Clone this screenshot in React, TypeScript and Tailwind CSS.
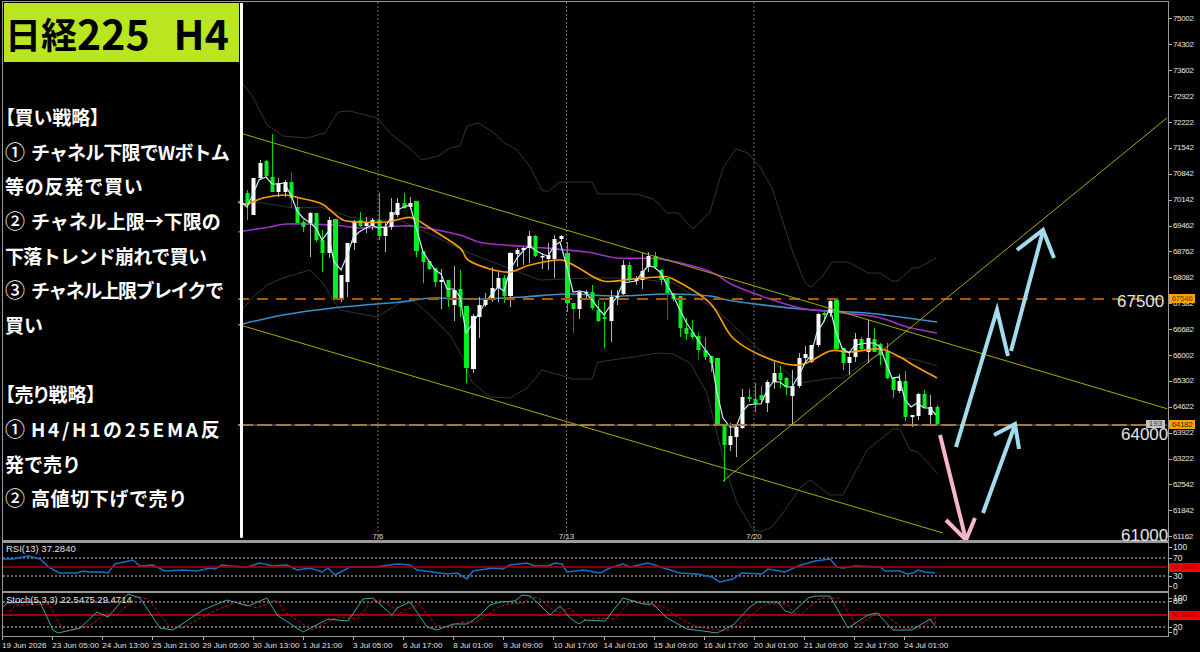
import React from "react";

type Bar = [number, number, number, number, "g" | "w" | "d"];
// high, body top, body bottom, low, kind, in page pixels
const bars: Bar[] = [
  [190,193,205,220,"g"],[178,178,215,215,"w"],[160,163,178,180,"w"],[160,161,176,177,"g"],[134,177,192,192,"g"],[178,183,192,197,"w"],
  [180,182,192,197,"w"],[172,182,198,208,"d"],[197,207,223,223,"g"],[220,222,227,232,"g"],[212,213,223,257,"w"],[213,213,240,242,"g"],
  [230,240,253,272,"g"],[217,220,253,258,"w"],[219,219,300,300,"g"],[275,275,298,302,"w"],[243,243,282,297,"w"],[220,222,243,250,"w"],
  [212,220,226,227,"g"],[217,222,226,233,"w"],[218,220,226,230,"w"],[193,220,236,240,"g"],[223,227,236,252,"w"],[198,212,227,230,"w"],
  [198,203,215,217,"w"],[193,203,208,209,"g"],[197,203,207,209,"w"],[201,201,251,257,"g"],[251,251,262,283,"g"],[261,261,269,270,"g"],
  [268,268,282,287,"g"],[269,280,282,309,"w"],[280,280,297,307,"g"],[266,290,305,321,"w"],[270,289,307,317,"g"],[306,306,368,383,"g"],
  [314,316,369,373,"w"],[297,305,317,338,"w"],[293,300,305,307,"w"],[267,288,300,302,"w"],[272,278,288,302,"w"],[275,278,296,303,"g"],
  [252,253,296,307,"w"],[248,250,254,267,"w"],[247,248,250,265,"w"],[231,236,248,263,"w"],[235,236,256,257,"g"],[253,256,257,269,"w"],
  [243,255,259,270,"w"],[235,239,259,278,"w"],[235,236,239,242,"w"],[242,253,303,312,"g"],[303,303,309,333,"d"],[290,292,309,319,"w"],
  [290,292,293,300,"w"],[285,292,308,310,"g"],[300,310,321,322,"g"],[302,317,319,348,"g"],[290,297,321,342,"w"],[290,296,297,305,"w"],
  [260,265,294,295,"w"],[262,265,280,282,"g"],[276,279,281,285,"w"],[253,271,280,289,"w"],[252,256,267,272,"w"],[252,256,267,268,"g"],
  [269,270,280,285,"g"],[278,278,293,320,"d"],[293,293,299,301,"g"],[296,296,328,337,"g"],[318,328,334,340,"g"],[320,332,337,339,"g"],
  [332,336,350,360,"d"],[337,350,357,360,"g"],[356,356,363,372,"g"],[358,358,425,425,"g"],[425,425,445,482,"g"],[423,436,445,451,"w"],
  [425,427,437,457,"w"],[389,397,428,429,"w"],[389,397,399,402,"g"],[383,399,404,412,"g"],[386,395,400,402,"g"],[380,382,403,412,"w"],
  [362,373,382,389,"w"],[366,373,380,388,"g"],[377,378,387,395,"g"],[370,386,396,425,"w"],[353,358,386,388,"w"],[346,354,358,363,"w"],
  [345,345,362,363,"w"],[313,314,345,347,"w"],[312,313,315,322,"g"],[298,301,313,317,"w"],[300,300,349,350,"g"],[348,348,363,370,"g"],
  [352,357,363,375,"w"],[333,339,357,362,"w"],[337,339,349,350,"g"],[320,338,352,363,"w"],[328,339,352,352,"g"],[343,344,355,365,"g"],
  [343,351,378,379,"g"],[378,378,390,398,"g"],[374,381,391,393,"w"],[371,381,417,421,"g"],[415,415,417,427,"w"],[393,394,416,420,"w"],
  [390,394,408,408,"g"],[395,407,415,424,"w"],[405,407,425,425,"g"],
];

const fast = "240,201 247,207 253,194 259,180 266,177 272,184 278,184 284,183 291,195 297,211 303,218 309,222 316,228 322,240 328,232 334,262 341,270 347,256 353,238 359,232 366,228 372,225 378,228 385,227 391,218 397,210 404,207 410,205 416,227 423,252 435,270 441,274 447,289 454,289 460,297 466,333 473,323 479,313 485,303 491,295 498,287 504,291 510,270 517,258 523,251 529,246 535,250 542,254 548,256 554,246 560,242 567,267 573,292 579,291 585,292 592,300 598,308 604,315 610,306 617,297 623,283 629,282 636,281 642,273 648,266 654,267 661,273 667,285 673,295 679,308 686,322 692,331 698,340 704,348 711,357 717,393 723,418 730,427 736,427 742,412 748,405 755,404 761,404 767,390 773,382 780,382 786,387 792,387 798,377 805,363 811,355 817,332 823,323 830,308 836,332 842,348 849,353 855,345 861,344 868,343 874,343 880,347 886,363 892,378 899,377 905,400 911,407 917,403 924,408 930,408 936,415";
const ema = "238,202 247,204 263,198 285,195 300,198 320,203 330,210 343,220 360,222 387,222 400,219 413,218 433,230 460,248 468,260 490,269 510,272 530,265 560,260 577,267 603,281 633,279 660,277 673,279 710,303 733,338 767,358 800,365 830,351 850,352 880,349 900,357 913,365 937,378";
const purple = "238,232 270,227 287,224 333,225 360,228 400,226 420,227 460,235 483,243 533,247 587,252 617,258 660,259 700,268 717,275 733,285 767,298 800,308 833,312 877,317 907,327 937,333";
const blue = "238,325 283,315 333,308 400,302 433,298 477,299 523,297 567,294 617,296 667,294 710,296 733,301 800,309 867,313 900,317 937,322";
const bandUp = "243,84 253,97 267,125 283,136 307,138 325,133 338,112 350,111 377,118 392,135 408,147 422,160 438,156 450,148 460,146 467,126 478,123 493,132 503,142 517,150 530,167 542,190 547,192 560,182 592,182 598,194 637,194 653,199 658,203 667,213 678,213 693,229 700,222 710,212 723,168 736,149 748,153 760,167 772,188 793,253 805,283 811,287 822,277 832,262 848,262 868,273 880,273 892,281 898,281 912,268 918,268 936,258";
const bandMid = "238,200 263,203 293,208 320,207 350,217 377,220 400,220 417,228 467,252 500,265 540,280 587,278 633,278 673,283 717,310 767,357 800,383 833,378 843,378 867,360 880,355 900,357 917,360 937,366";
const bandLow = "240,312 253,297 267,285 283,278 310,270 323,283 333,300 340,310 377,317 393,307 400,303 413,301 427,312 450,335 463,358 472,382 490,397 510,398 527,388 542,370 573,379 592,379 598,362 633,357 658,353 673,354 690,363 707,393 727,473 737,503 752,528 760,532 772,527 785,510 800,488 810,480 830,495 843,495 867,450 893,429 900,429 910,450 918,452 937,473";

const rsi = "2,559 13,559 28,556 40,559 50,568 60,573 77,573 83,571 90,572 103,572 108,573 115,564 133,560 140,566 153,565 165,571 183,570 197,571 210,568 215,569 222,565 230,566 247,567 260,563 273,566 287,565 297,570 310,568 322,572 328,568 335,575 350,567 375,567 397,564 410,565 417,570 433,572 447,574 457,573 467,579 473,571 493,568 503,569 510,565 527,563 535,566 548,566 555,563 562,564 567,572 583,570 600,573 610,568 623,564 630,567 648,563 667,569 680,573 697,574 712,577 720,582 733,579 742,573 762,574 768,569 785,572 798,566 815,561 830,559 837,567 843,568 855,566 880,567 885,571 900,571 907,574 913,573 918,570 925,572 935,573";
const stoch = "0,610 7,603 40,602 53,630 58,633 80,628 97,612 108,617 128,594 140,598 160,628 173,630 203,610 227,600 248,606 267,598 277,615 303,632 328,619 348,621 363,599 373,598 392,615 397,608 410,602 427,627 437,630 453,624 467,624 478,617 490,605 500,602 515,601 522,595 530,596 540,605 550,615 560,606 570,618 579,624 585,620 605,621 623,598 643,604 653,604 667,618 687,629 703,631 717,633 733,625 750,607 757,602 778,602 785,611 792,613 808,598 815,596 830,596 848,628 868,615 877,613 893,630 912,630 930,619 935,626";
const signal = stoch.split(" ").map((p) => { const [x, y] = p.split(",").map(Number); return `${Math.min(x + 9, 935)},${y + (y < 615 ? 2 : -2)}`; }).join(" ");

// Catmull-Rom smoothing for the slow moving averages
function smooth(src: string): string {
  const p = src.split(" ").map((s) => s.split(",").map(Number));
  let d = `M${p[0][0]} ${p[0][1]}`;
  for (let i = 0; i < p.length - 1; i++) {
    const a = p[Math.max(i - 1, 0)], b = p[i], c = p[i + 1], e = p[Math.min(i + 2, p.length - 1)];
    d += ` C${b[0] + (c[0] - a[0]) / 6} ${b[1] + (c[1] - a[1]) / 6} ${c[0] - (e[0] - b[0]) / 6} ${c[1] - (e[1] - b[1]) / 6} ${c[0]} ${c[1]}`;
  }
  return d;
}

const prices = ["75002","74302","73602","72922","72222","71542","70842","70142","69462","68762","68082","67382","66682","66002","65302","64622","63922","63222","62542","61842","61162"];
const times = ["19 Jun 2026","23 Jun 05:00","24 Jun 13:00","25 Jun 21:00","29 Jun 05:00","30 Jun 13:00","1 Jul 21:00","3 Jul 05:00","6 Jul 17:00","8 Jul 01:00","9 Jul 09:00","10 Jul 17:00","14 Jul 01:00","15 Jul 09:00","16 Jul 17:00","20 Jul 01:00","21 Jul 09:00","22 Jul 17:00","24 Jul 01:00"];
const grid = [378, 566.5, 754];

function Mark({ children }: { children: React.ReactNode }) {
  return <span className="inline-block w-[26px] text-[20px] font-medium">{children}</span>;
}

function Tick({ children }: { children: React.ReactNode }) {
  return (
    <div className="flex items-center h-[25.9px] shrink-0">
      <span className="w-[3px] h-px bg-[#b0b0b0]" />
      <span className="ml-[1px] text-[8px] tracking-[-0.35px] text-[#e4e4e4] leading-none">{children}</span>
    </div>
  );
}

function Scale({ h, mt, children }: { h: string; mt?: string; children: React.ReactNode }) {
  return (
    <div className={`flex items-center shrink-0 ${h} ${mt ?? ""}`}>
      <span className="w-[3px] h-px bg-[#b0b0b0]" />
      <span className="ml-[1px] text-[8.5px] text-[#e4e4e4] leading-none">{children}</span>
    </div>
  );
}

function RedTag() {
  return (
    <div className="flex items-center h-[4px] shrink-0">
      <span className="flex items-center justify-center w-[31px] h-[9px] bg-[#ff0000] text-[7.5px] text-[#9a0000] leading-none">50.0000</span>
    </div>
  );
}

export default function App() {
  return (
    <div className="relative w-[1200px] h-[652px] bg-black overflow-hidden pt-px pl-[2px] text-white font-['Liberation_Sans',sans-serif]">
      {/* main chart */}
      <div className="flex h-[542px]">
        <div className="relative w-[1167px] h-full border-t border-l border-r border-b-[3px] border-[#9a9a9a]">
          <svg className="block" width={1164} height={538} viewBox="3 2 1164 538" fill="none">
            {grid.map((x) => (
              <line key={x} x1={x} x2={x} y1={2} y2={540} stroke="#6a6a6a" strokeWidth={1} strokeDasharray="2 2" />
            ))}
            <polyline points={bandUp} stroke="#303636" strokeWidth={1} />
            <polyline points={bandMid} stroke="#303636" strokeWidth={1} />
            <polyline points={bandLow} stroke="#303636" strokeWidth={1} />
            <path d={smooth(blue)} stroke="#3d8ecb" strokeWidth={1.6} />
            <path d={smooth(purple)} stroke="#a02fc8" strokeWidth={1.6} />
            {bars.map((b, i) => {
              const x = Math.round(247 + 6.27 * i) + 0.5;
              const white = b[4] === "w";
              const wick = white ? "#b4b4b4" : b[4] === "d" ? "#008a00" : "#00e000";
              const body = white ? "#ffffff" : "#00f020";
              const thick = b[2] - b[1] > 40;
              const w = thick ? 5 : 4;
              return (
                <g key={i}>
                  <line x1={x} x2={x} y1={b[0]} y2={b[3]} stroke={wick} strokeWidth={1} />
                  <rect x={x - w / 2} y={b[1]} width={w} height={Math.max(b[2] - b[1], 1.5)} fill={body} />
                </g>
              );
            })}
            <path d={smooth(ema)} stroke="#ff9a0a" strokeWidth={1.7} />
            <polyline points={fast} stroke="#c8f2f6" strokeWidth={1.2} />
            <line x1={238} x2={1168} y1={299} y2={299} stroke="#a85c00" strokeWidth={2} strokeDasharray="11 8" />
            <line x1={238} x2={1168} y1={425} y2={425} stroke="#4a4a4a" strokeWidth={1.5} />
            <line x1={238} x2={1168} y1={425} y2={425} stroke="#c8923a" strokeWidth={1.5} strokeDasharray="15 4" />
            <line x1={240} y1={133} x2={1168} y2={409} stroke="#aaaa00" strokeWidth={1} />
            <line x1={240} y1={325} x2={943} y2={533} stroke="#aaaa00" strokeWidth={1} />
            <line x1={723} y1={481} x2={1168} y2={117} stroke="#aaaa00" strokeWidth={1} />
            <g stroke="#a3dcec" strokeWidth={4} strokeLinejoin="miter">
              <polyline points="956,447 997,310 1008,356" />
              <polyline points="1011,351 1043,231" />
              <polyline points="1017,250 1043,230 1054,258" />
              <polyline points="983,513 1015,425" />
              <polyline points="994,435 1015,424 1019,449" />
            </g>
            <g stroke="#f7b6cc" strokeWidth={4}>
              <polyline points="940,435 966,540" />
              <polyline points="946,520 966,540 975,518" />
            </g>
          </svg>
          <span className="absolute left-[375px] top-[531px] -translate-x-1/2 text-[8px] leading-none text-[#d8d8d8]">7/6</span>
          <span className="absolute left-[563.5px] top-[531px] -translate-x-1/2 text-[8px] leading-none text-[#d8d8d8]">7/13</span>
          <span className="absolute left-[751px] top-[531px] -translate-x-1/2 text-[8px] leading-none text-[#d8d8d8]">7/20</span>
          <span className="absolute left-[1114px] top-[290px] text-[17px] leading-[20px] text-[#e4e4e4]">67500</span>
          <span className="absolute left-[1118px] top-[423px] text-[17px] leading-[20px] text-[#e4e4e4]">64000</span>
          <span className="absolute left-[1118px] top-[524px] text-[17px] leading-[20px] text-[#e4e4e4]">61000</span>
          <span className="absolute left-[1143px] top-[418px] flex items-center justify-center w-[19px] h-[8px] bg-[#c4c4c4] text-[8px] leading-none text-[#333]">193</span>
        </div>
        <div className="relative w-[31px] pt-[5px] flex flex-col shrink-0">
          {prices.map((p) => (
            <Tick key={p}>{p}</Tick>
          ))}
          <span className="absolute left-0 top-[293px] flex items-center justify-center w-[26px] h-[9px] bg-[#ff9f00] text-[8px] tracking-[-0.35px] leading-none text-[#5a4300]">67546</span>
          <span className="absolute left-0 top-[419px] flex items-center justify-center w-[26px] h-[9px] bg-[#ff9f00] text-[8px] tracking-[-0.35px] leading-none text-[#3a2c00]">64182</span>
        </div>
      </div>

      {/* RSI pane */}
      <div className="flex h-[50px]">
        <div className="relative w-[1167px] h-full border-l border-r border-b-2 border-[#9a9a9a]">
          <svg className="block" width={1164} height={48} viewBox="3 543 1164 48" fill="none">
            <line x1={3} x2={1167} y1={558} y2={558} stroke="#cfcfcf" strokeDasharray="2 2" />
            <line x1={3} x2={1167} y1={576} y2={576} stroke="#cfcfcf" strokeDasharray="2 2" />
            <polyline points={rsi} stroke="#1a6fc4" strokeWidth={1.5} />
            <line x1={3} x2={1167} y1={567} y2={567} stroke="#b00000" strokeWidth={1.5} />
          </svg>
          <span className="absolute left-[3px] top-[1px] text-[9.5px] leading-[10px] text-[#e0e0e0]">RSI(13) 37.2840</span>
        </div>
        <div className="w-[31px] flex flex-col shrink-0">
          <Scale h="h-[8px]">100</Scale>
          <Scale h="h-[14px]">70</Scale>
          <RedTag />
          <Scale h="h-[14px]">30</Scale>
          <Scale h="h-[6px]">0</Scale>
        </div>
      </div>

      {/* Stochastic pane */}
      <div className="flex h-[44px]">
        <div className="relative w-[1167px] h-full border-l border-r border-b border-[#9a9a9a]">
          <svg className="block" width={1164} height={43} viewBox="3 593 1164 43" fill="none">
            <line x1={3} x2={1167} y1={602} y2={602} stroke="#cfcfcf" strokeDasharray="2 2" />
            <line x1={3} x2={1167} y1={627} y2={627} stroke="#cfcfcf" strokeDasharray="2 2" />
            <line x1={3} x2={1167} y1={615} y2={615} stroke="#dd0000" strokeWidth={1.5} />
            <polyline points={signal} stroke="#d01010" strokeWidth={1} strokeDasharray="3 2" />
            <polyline points={stoch} stroke="#3fa5ad" strokeWidth={1} />
          </svg>
          <span className="absolute left-[3px] top-[2px] text-[9.5px] leading-[10px] text-[#e0e0e0]">Stoch(5,3,3) 22.5475 29.4714</span>
        </div>
        <div className="w-[31px] flex flex-col shrink-0">
          <Scale h="h-[10px]">100</Scale>
          <Scale h="h-[4px]" mt="-mt-[4px]">80</Scale>
          <div className="flex items-center h-[24px] shrink-0">
            <span className="flex items-center justify-center w-[31px] h-[9px] bg-[#ff0000] text-[7.5px] text-[#9a0000] leading-none">50.0000</span>
          </div>
          <Scale h="h-[4px]" mt="-mt-[2px]">20</Scale>
          <Scale h="h-[6px]">0</Scale>
        </div>
      </div>

      {/* time axis */}
      <div className="flex">
        {times.map((t) => (
          <div key={t} className="w-[50.14px] shrink-0 flex flex-col items-start">
            <span className="w-px h-[3px] bg-[#b0b0b0]" />
            <span className="mt-[1px] text-[8.1px] leading-[10px] whitespace-nowrap text-[#e0e0e0]">{t}</span>
          </div>
        ))}
      </div>

      {/* strategy panel */}
      <div className="absolute left-[3px] top-[2px] flex h-[536px]">
        <div className="w-[235px] bg-black font-['Noto_Sans_CJK_JP',sans-serif]">
          <div className="ml-px mt-px h-[59px] w-[235px] bg-[#b9e620] flex items-center pl-[1px] font-bold leading-none text-black whitespace-pre">
            <span className="text-[36px]">日経</span>
            <span className="text-[41px]">225</span>
            <span className="ml-[24px] text-[41px]">H4</span>
          </div>
          <div className="mt-[38px] pl-[2px] font-bold text-[19px] leading-[34.65px] whitespace-pre text-white">
            <div className="[font-feature-settings:'palt']">【買い戦略】</div>
            <div><Mark>①</Mark><span className="tracking-[-0.85px]">チャネル下限でWボトム</span></div>
            <div className="tracking-[0.8px]">等の反発で買い</div>
            <div><Mark>②</Mark>チャネル上限→下限の</div>
            <div className="tracking-[-0.65px]">下落トレンド崩れで買い</div>
            <div><Mark>③</Mark><span className="tracking-[-1.55px]">チャネル上限ブレイクで</span></div>
            <div>買い</div>
            <div>{"\u00a0"}</div>
            <div className="[font-feature-settings:'palt']">【売り戦略】</div>
            <div><Mark>①</Mark><span className="tracking-[2.7px]">H4/H1の25EMA反</span></div>
            <div>発で売り</div>
            <div><Mark>②</Mark><span className="tracking-[0.6px]">高値切下げで売り</span></div>
          </div>
        </div>
        <div className="ml-[2px] mt-px w-[3px] bg-white rounded-b-sm" />
      </div>
    </div>
  );
}
